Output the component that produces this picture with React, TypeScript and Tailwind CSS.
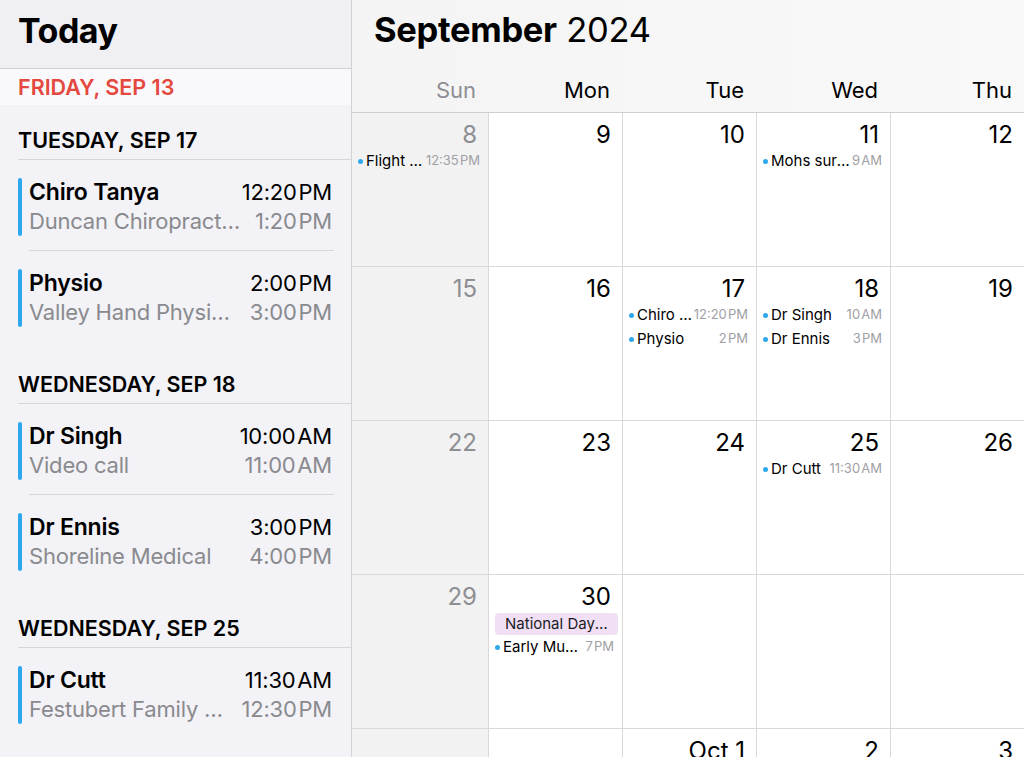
type AgendaEvent = { title: string; place: string; start: string; end: string };

const agenda: { day: string; events: AgendaEvent[] }[] = [
  {
    day: "TUESDAY, SEP 17",
    events: [
      { title: "Chiro Tanya", place: "Duncan Chiropractic Centre", start: "12:20\u200APM", end: "1:20\u200APM" },
      { title: "Physio", place: "Valley Hand Physiotherapy", start: "2:00\u200APM", end: "3:00\u200APM" },
    ],
  },
  {
    day: "WEDNESDAY, SEP 18",
    events: [
      { title: "Dr Singh", place: "Video call", start: "10:00\u200AAM", end: "11:00\u200AAM" },
      { title: "Dr Ennis", place: "Shoreline Medical", start: "3:00\u200APM", end: "4:00\u200APM" },
    ],
  },
  {
    day: "WEDNESDAY, SEP 25",
    events: [
      { title: "Dr Cutt", place: "Festubert Family Practice", start: "11:30\u200AAM", end: "12:30\u200APM" },
    ],
  },
];

type CalEvent = { title: string; time?: string; allDay?: boolean };
type Cell = { label: string; events?: CalEvent[] };

const weeks: Cell[][] = [
  [
    { label: "8", events: [{ title: "Flight to Vancouver", time: "12:35\u200APM" }] },
    { label: "9" },
    { label: "10" },
    { label: "11", events: [{ title: "Mohs surgery", time: "9\u200AAM" }] },
    { label: "12" },
  ],
  [
    { label: "15" },
    { label: "16" },
    {
      label: "17",
      events: [
        { title: "Chiro Tanya", time: "12:20\u200APM" },
        { title: "Physio", time: "2\u200APM" },
      ],
    },
    {
      label: "18",
      events: [
        { title: "Dr Singh", time: "10\u200AAM" },
        { title: "Dr Ennis", time: "3\u200APM" },
      ],
    },
    { label: "19" },
  ],
  [
    { label: "22" },
    { label: "23" },
    { label: "24" },
    { label: "25", events: [{ title: "Dr Cutt", time: "11:30\u200AAM" }] },
    { label: "26" },
  ],
  [
    { label: "29" },
    {
      label: "30",
      events: [
        { title: "National Day for Truth and Reconciliation", allDay: true },
        { title: "Early Music Concert", time: "7\u200APM" },
      ],
    },
    { label: "" },
    { label: "" },
    { label: "" },
  ],
  [{ label: "" }, { label: "" }, { label: "Oct 1" }, { label: "2" }, { label: "3" }],
];

const dayNames = ["Sun", "Mon", "Tue", "Wed", "Thu"];

const AgendaItem = ({ ev, first }: { ev: AgendaEvent; first: boolean }) => (
  <div className={`ml-[29px] mr-[17px] ${first ? "" : "border-t border-[#d6d6da]"}`}>
    <div className="-ml-[11px] flex pt-[18px] pb-[14px]">
      <div className="w-[4px] shrink-0 rounded-full bg-[#2ea8ec]" />
      <div className="ml-[7px] flex min-w-0 flex-1 flex-col leading-[29px] tracking-[-0.2px]">
        <div className="flex justify-between gap-3 text-[23px]">
          <span className="truncate font-semibold text-black">{ev.title}</span>
          <span className="shrink-0 pr-[2px] text-[22px] text-black">{ev.start}</span>
        </div>
        <div className="flex justify-between gap-3 text-[22px] text-[#8a8a8e]">
          <span className="truncate">{ev.place}</span>
          <span className="shrink-0 pr-[2px]">{ev.end}</span>
        </div>
      </div>
    </div>
  </div>
);

const MonthCell = ({ cell, col }: { cell: Cell; col: number }) => {
  const sunday = col === 0;
  return (
    <div
      className={`h-[154px] min-w-0 border-b border-[#d9d9d9] ${col > 0 ? "border-l" : ""} ${
        sunday ? "bg-[#f2f2f2]" : "bg-white"
      }`}
    >
      <div
        className={`pt-[8px] pr-[11px] text-right text-[24px] leading-[28px] ${
          sunday ? "text-[#8e8e93]" : "text-black"
        }`}
      >
        {cell.label}
      </div>
      <div className="pl-[6px] pr-[8px]">
        {cell.events?.map((e) =>
          e.allDay ? (
            <div
              key={e.title}
              className="mt-[2px] -mr-[4px] h-[22px] truncate rounded-[4px] bg-[#f0dff5] px-[10px] text-[15px] leading-[22px] text-[#1c1c1e]"
            >
              {e.title}
            </div>
          ) : (
            <div key={e.title} className="flex h-[24px] items-center">
              <span className="mr-[3px] h-[5px] w-[5px] shrink-0 rounded-full bg-[#2ea8ec]" />
              <span className="min-w-0 truncate text-[15px] text-black">{e.title}</span>
              <span className="ml-auto shrink-0 pl-[1px] text-[13px] text-[#a0a0a5]">{e.time}</span>
            </div>
          )
        )}
      </div>
    </div>
  );
};

export default function App() {
  return (
    <div
      className="flex h-[757px] w-[1024px] overflow-hidden bg-white"
      style={{ fontFamily: "Inter, 'Noto Sans', sans-serif" }}
    >
      <aside className="flex w-[352px] shrink-0 flex-col border-r border-[#d1d1d6] bg-[#f2f2f7]">
        <div className="flex h-[69px] shrink-0 items-center border-b border-[#d1d1d6] bg-[#efeff4] px-[18px]">
          <h1 className="-mt-[7px] text-[34px] font-bold tracking-[-0.5px] text-black">Today</h1>
        </div>
        <div className="flex h-[36px] shrink-0 items-center bg-[#f9f9fb] px-[18px] text-[21.5px] font-semibold text-[#e5483f]">
          FRIDAY, SEP 13
        </div>
        {agenda.map((section, i) => (
          <section key={section.day} className={i === 0 ? "" : "mt-[8px]"}>
            <div className="ml-[18px] border-b border-[#d6d6da] pt-[23px] pb-[7px] text-[21.5px] leading-[24px] font-semibold text-black">
              {section.day}
            </div>
            {section.events.map((ev, j) => (
              <AgendaItem key={ev.title} ev={ev} first={j === 0} />
            ))}
          </section>
        ))}
      </aside>

      <main className="flex min-w-0 flex-1 flex-col">
        <header className="h-[113px] shrink-0 border-b border-[#cfcfcf] bg-gradient-to-r from-[#f4f4f4] to-[#f9f9f9]">
          <div className="h-[68px] pl-[22px] pt-[8px] text-[34.5px] leading-[44px] tracking-[-0.3px] text-black">
            <span className="font-bold">September</span> 2024
          </div>
          <div className="grid grid-cols-[136px_134px_134px_134px_134px] text-[22px] leading-[44px]">
            {dayNames.map((d, i) => (
              <div
                key={d}
                className={`pr-[12px] text-right ${i === 0 ? "text-[#8e8e93]" : "text-black"}`}
              >
                {d}
              </div>
            ))}
          </div>
        </header>
        <div className="grid grid-cols-[136px_134px_134px_134px_134px]">
          {weeks.map((week, r) =>
            week.map((cell, c) => <MonthCell key={`${r}-${c}`} cell={cell} col={c} />)
          )}
        </div>
      </main>
    </div>
  );
}
